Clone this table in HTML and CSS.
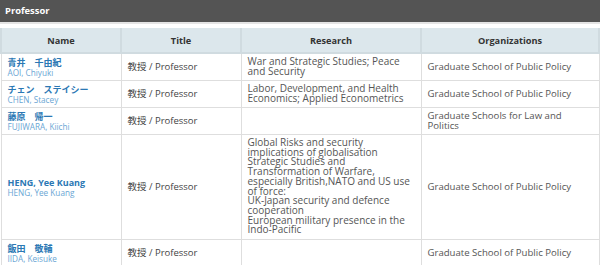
FILE: index.html
```html
<!DOCTYPE html>
<html lang="ja">
<head>
<meta charset="utf-8">
<link rel="stylesheet" href="styles.css">
</head>
<body>
<div class="bar">Professor</div>
<table class="list">
  <colgroup>
    <col class="c-name"><col class="c-title"><col class="c-research"><col class="c-org">
  </colgroup>
  <thead>
    <tr><th>Name</th><th>Title</th><th>Research</th><th>Organizations</th></tr>
  </thead>
  <tbody>
    <tr>
      <td><a class="jp">青井　千由紀</a><span class="en">AOI, Chiyuki</span></td>
      <td class="title">教授 / Professor</td>
      <td class="res">War and Strategic Studies; Peace and Security</td>
      <td>Graduate School of Public Policy</td>
    </tr>
    <tr>
      <td><a class="jp">チェン　ステイシー</a><span class="en">CHEN, Stacey</span></td>
      <td class="title">教授 / Professor</td>
      <td class="res">Labor, Development, and Health Economics; Applied Econometrics</td>
      <td>Graduate School of Public Policy</td>
    </tr>
    <tr>
      <td><a class="jp">藤原　帰一</a><span class="en">FUJIWARA, Kiichi</span></td>
      <td class="title">教授 / Professor</td>
      <td class="res"></td>
      <td>Graduate Schools for Law and Politics</td>
    </tr>
    <tr>
      <td><a class="jp">HENG, Yee Kuang</a><span class="en">HENG, Yee Kuang</span></td>
      <td class="title">教授 / Professor</td>
      <td class="res">Global Risks and security implications of globalisation<br>Strategic Studies and Transformation of Warfare, especially British,NATO and US use of force:<br>UK-Japan security and defence cooperation<br>European military presence in the Indo-Pacific</td>
      <td>Graduate School of Public Policy</td>
    </tr>
    <tr>
      <td><a class="jp">飯田　敬輔</a><span class="en">IIDA, Keisuke</span></td>
      <td class="title">教授 / Professor</td>
      <td class="res"></td>
      <td>Graduate School of Public Policy</td>
    </tr>
  </tbody>
</table>
</body>
</html>
```

FILE: styles.css
```css
html, body {
  margin: 0;
  padding: 0;
  background: #fff;
}
body {
  font-family: "Open Sans", "Noto Sans CJK JP", sans-serif;
  color: #555;
}
.bar {
  height: 22px;
  line-height: 22px;
  background: #545454;
  color: #fff;
  font-weight: 700;
  font-size: 9.4px;
  padding-left: 5px;
  border-bottom: 2px solid #e4e4e4;
  margin-bottom: 4px;
}
.list {
  width: 598px;
  border-collapse: collapse;
  table-layout: fixed;
  font-size: 9.6px;
}
.c-name { width: 120px; }
.c-title { width: 120px; }
.c-research { width: 180px; }
.c-org { width: 178px; }
.list th {
  background: #dce7ec;
  color: #333;
  font-weight: 700;
  font-size: 9.2px;
  height: 24px;
  padding: 0;
  border: 2px solid #d0dbe0;
  border-top: 0;
}
.list td {
  border: 1px solid #dedede;
  padding: 3px 6px;
  line-height: 10px;
  vertical-align: middle;
  color: #555;
}
.list td.res {
  font-size: 10px;
  line-height: 9.7px;
  padding: 3px 6px 3.5px;
}
.list td.title {
  font-size: 9.5px;
  color: #444;
}
.jp {
  display: block;
  color: #2b78b4;
  font-weight: 700;
  font-size: 9px;
  line-height: 11px;
}
.en {
  display: block;
  color: #6aa6d4;
  font-size: 8.2px;
  line-height: 9px;
}
```
